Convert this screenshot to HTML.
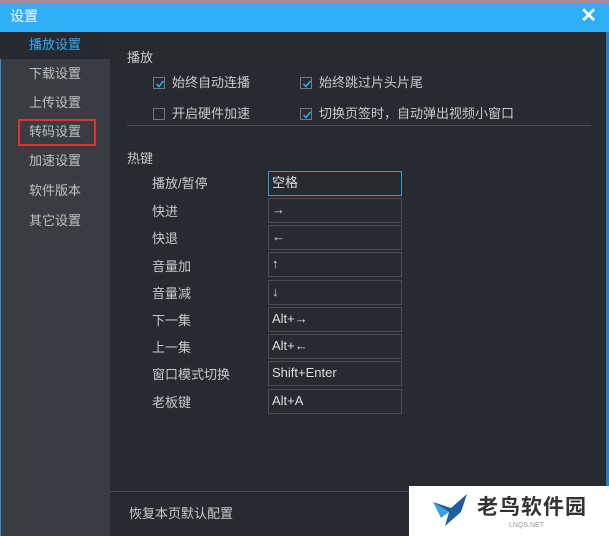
<!DOCTYPE html><html><head><meta charset="utf-8"><style>
*{margin:0;padding:0;box-sizing:border-box}
body{width:609px;height:536px;overflow:hidden;background:#272a31;font-family:"Liberation Sans","Noto Sans CJK SC",sans-serif;font-size:13px;color:#c8c8c8;position:relative}
.a{position:absolute}
.top{left:0;top:0;width:609px;height:3px;background:#a88c8c}
.title{left:0;top:3px;width:609px;height:29px;background:#2eaff8;color:#fff;font-size:14px;line-height:27px;padding-left:10px}
.side{left:0;top:32px;width:110px;height:504px;background:#393c43;border-left:1px solid #2a8fd0}
.rb{right:0;top:32px;width:3px;height:504px;background:#2a7fb8}
.it{left:0;width:110px;text-align:center;line-height:26px;color:#c0c0c0}
.sel{background:#26292f;color:#2eaff8}
.cb{width:12px;height:12px;border:1px solid #777;}
.cb svg{position:absolute;left:1px;top:1px}
.lab{color:#c8c8c8}
.inp{left:268px;width:134px;height:25px;border:1px solid #4a4d54;line-height:22px;padding-left:3px;color:#ddd}
</style></head><body>
<div class="a top"></div>
<div class="a title">设置<span style="position:absolute;right:12px;top:0;font-size:20px;font-weight:bold">✕</span></div>
<div class="a side"></div>
<div class="a rb"></div>
<div class="a it sel" style="top:32px;height:27px">播放设置</div>
<div class="a it" style="top:61px">下载设置</div>
<div class="a it" style="top:90px">上传设置</div>
<div class="a it" style="top:119px">转码设置</div>
<div class="a" style="left:18px;top:119px;width:78px;height:27px;border:2px solid #e8312f"></div>
<div class="a it" style="top:148px">加速设置</div>
<div class="a it" style="top:178px">软件版本</div>
<div class="a it" style="top:208px">其它设置</div>
<div class="a lab" style="left:127px;top:47px">播放</div>
<div class="a cb" style="left:153px;top:77px"><svg width="10" height="10"><path d="M1.5 5 L4 7.5 L8.5 2" stroke="#2eaff8" stroke-width="1.5" fill="none"/></svg></div>
<div class="a lab" style="left:172px;top:72px">始终自动连播</div>
<div class="a cb" style="left:300px;top:77px"><svg width="10" height="10"><path d="M1.5 5 L4 7.5 L8.5 2" stroke="#2eaff8" stroke-width="1.5" fill="none"/></svg></div>
<div class="a lab" style="left:319px;top:72px">始终跳过片头片尾</div>
<div class="a cb" style="left:153px;top:108px"></div>
<div class="a lab" style="left:172px;top:103px">开启硬件加速</div>
<div class="a cb" style="left:300px;top:108px"><svg width="10" height="10"><path d="M1.5 5 L4 7.5 L8.5 2" stroke="#2eaff8" stroke-width="1.5" fill="none"/></svg></div>
<div class="a lab" style="left:319px;top:103px">切换页签时，自动弹出视频小窗口</div>
<div class="a" style="left:127px;top:125px;width:464px;height:1px;background:#4a4d54"></div>
<div class="a lab" style="left:127px;top:148px">热键</div>
<div class="a lab" style="left:152px;top:173px">播放/暂停</div><div class="a inp" style="top:171px;border-color:#2a9ad8">空格</div>
<div class="a lab" style="left:152px;top:201px">快进</div><div class="a inp" style="top:198px">→</div>
<div class="a lab" style="left:152px;top:228px">快退</div><div class="a inp" style="top:225px">←</div>
<div class="a lab" style="left:152px;top:256px">音量加</div><div class="a inp" style="top:252px">↑</div>
<div class="a lab" style="left:152px;top:283px">音量减</div><div class="a inp" style="top:280px">↓</div>
<div class="a lab" style="left:152px;top:310px">下一集</div><div class="a inp" style="top:307px">Alt+→</div>
<div class="a lab" style="left:152px;top:337px">上一集</div><div class="a inp" style="top:334px">Alt+←</div>
<div class="a lab" style="left:152px;top:364px">窗口模式切换</div><div class="a inp" style="top:361px">Shift+Enter</div>
<div class="a lab" style="left:152px;top:392px">老板键</div><div class="a inp" style="top:389px">Alt+A</div>
<div class="a" style="left:110px;top:491px;width:496px;height:1px;background:#4a4d54"></div>
<div class="a lab" style="left:129px;top:503px">恢复本页默认配置</div>
<div class="a" style="left:409px;top:486px;width:200px;height:50px;background:#fff">
<svg class="a" style="left:22px;top:6px" width="40" height="36" viewBox="0 0 40 36"><path d="M2 10 L20 16 L36 2 L30 20 L14 34 L18 20 Z" fill="#1f5f9a"/><path d="M2 10 L18 20 L10 26Z" fill="#3aa0e0"/></svg>
<div class="a" style="left:68px;top:5px;font-size:21px;font-weight:bold;color:#333;letter-spacing:1px">老鸟软件园</div>
<div class="a" style="left:100px;top:36px;font-size:7px;color:#999">LNQS.NET</div>
</div>
</body></html>
